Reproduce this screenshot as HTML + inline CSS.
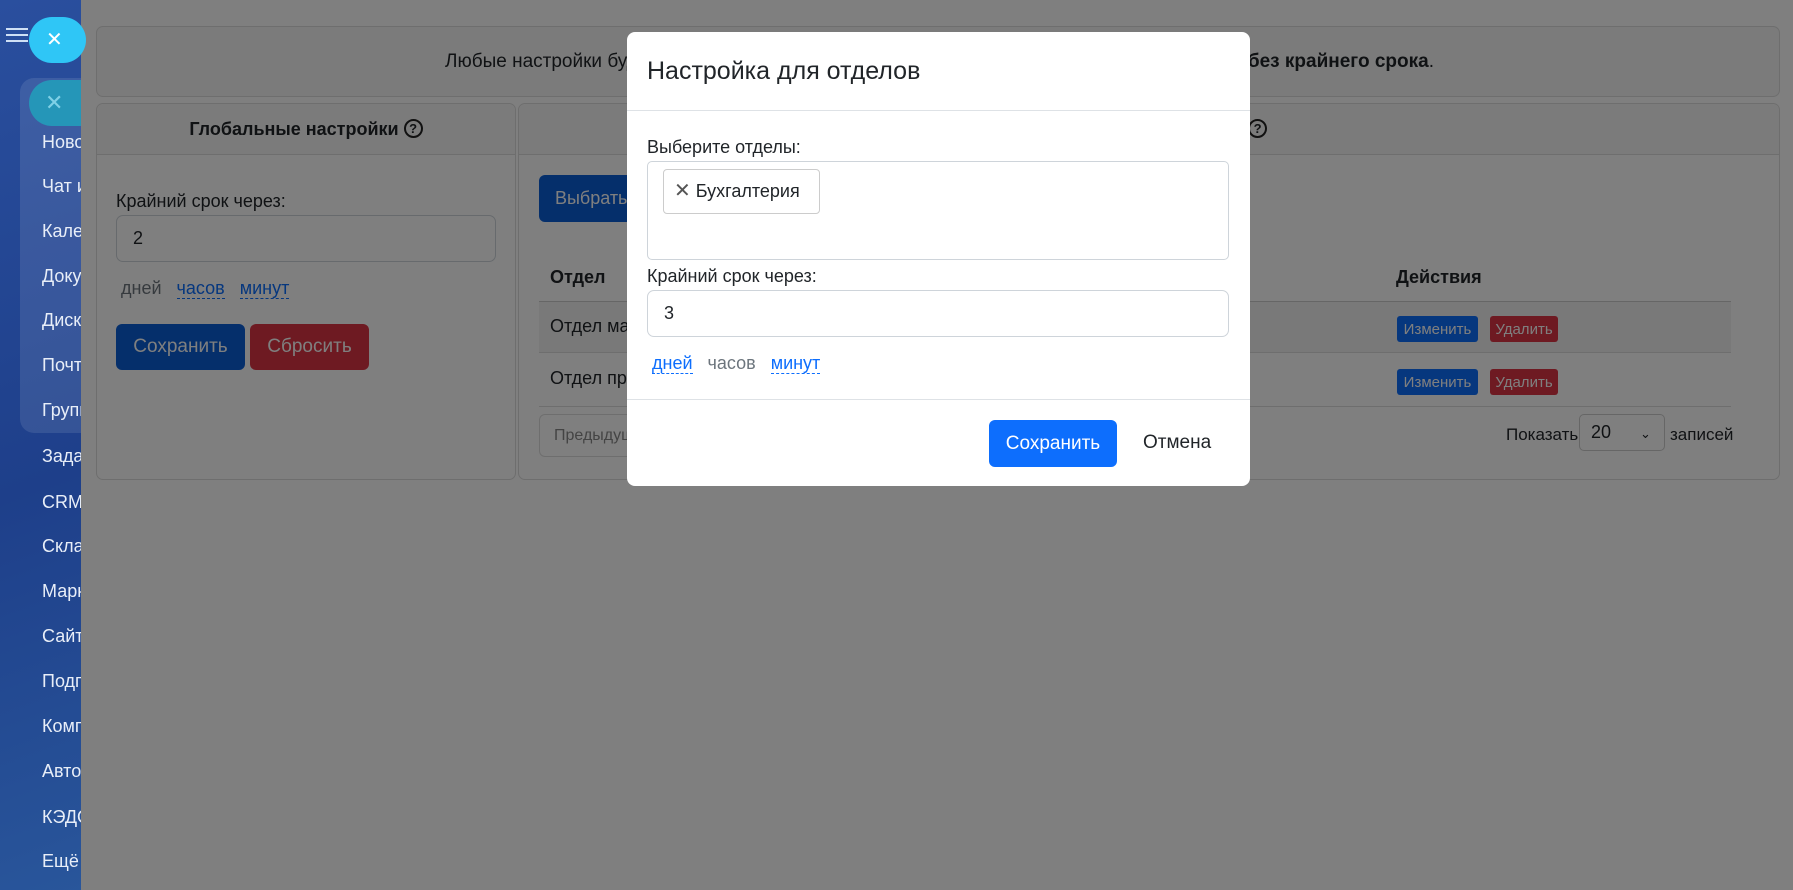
<!DOCTYPE html>
<html><head><meta charset="utf-8"><style>
*{box-sizing:border-box;margin:0;padding:0}
body{width:1793px;height:890px;overflow:hidden;position:relative;font-family:"Liberation Sans",sans-serif;font-size:18px;color:#212529;background:#1d3f8c}
.side{position:absolute;left:0;top:0;width:300px;height:890px;background:linear-gradient(160deg,#2a4f9e 0%,#1e3f8a 50%,#2b5a9e 100%)}
.side .it{position:absolute;left:42px;color:#e8eef8;font-size:18px}
.main{position:absolute;left:81px;top:0;width:1712px;height:890px;background:#fff}
.abs{position:absolute}
.card{position:absolute;border:1px solid #dcdcdc;border-radius:7px;background:#fff}
.hdr{background:#f7f7f7;border-bottom:1px solid #dcdcdc;font-weight:bold;text-align:center}
.inp{position:absolute;border:1px solid #ced4da;border-radius:7px;background:#fff;padding-left:16px;display:flex;align-items:center}
.btn{position:absolute;border-radius:6px;color:#fff;display:flex;align-items:center;justify-content:center}
.lnk{color:#0d6efd;border-bottom:1px dashed #0d6efd}
.ov{position:absolute;left:81px;top:0;width:1712px;height:890px;background:rgba(0,0,0,.5)}
.q{display:inline-block;width:19px;height:19px;border:2px solid #222;border-radius:50%;font-size:13px;line-height:15px;text-align:center;vertical-align:2px}
</style></head><body>
<div class="side">
 <div class="abs" style="left:6px;top:28px;width:22px;height:2px;background:#cfe0f5;box-shadow:0 6px #cfe0f5,0 12px #cfe0f5"></div>
 <div class="abs" style="left:20px;top:78px;width:120px;height:355px;background:rgba(255,255,255,.1);border-radius:14px"></div>
 <div class="abs" style="left:29px;top:80px;width:80px;height:46px;border-radius:23px;background:#2596b8;color:#7fd0e6;font-size:22px;padding-left:16px;line-height:46px">✕</div>
 <div class="it" style="top:132px">Новости</div><div class="it" style="top:176px">Чат и</div><div class="it" style="top:221px">Календарь</div><div class="it" style="top:266px">Документы</div><div class="it" style="top:310px">Диск</div><div class="it" style="top:355px">Почта</div><div class="it" style="top:400px">Группы</div><div class="it" style="top:446px">Задачи</div><div class="it" style="top:492px">CRM</div><div class="it" style="top:536px">Склад</div><div class="it" style="top:581px">Маркет</div><div class="it" style="top:626px">Сайты</div><div class="it" style="top:671px">Подпись</div><div class="it" style="top:716px">Компания</div><div class="it" style="top:761px">Автоматизация</div><div class="it" style="top:807px">КЭДО</div><div class="it" style="top:851px">Ещё</div>
</div>
<div class="main">
 <div class="card" style="left:15px;top:26px;width:1684px;height:71px;background:#f7f7f7">
  <div class="abs" style="left:348px;top:24px;width:989px;display:flex;justify-content:space-between;font-size:19px"><span>Любые настройки будут применены</span><span><b>без крайнего срока</b>.</span></div>
 </div>
 <div class="card" style="left:15px;top:103px;width:420px;height:377px">
  <div class="hdr" style="height:51px;line-height:51px;border-radius:7px 7px 0 0">Глобальные настройки <span class="q">?</span></div>
  <div class="abs" style="left:19px;top:87px">Крайний срок через:</div>
  <div class="inp" style="left:19px;top:111px;width:380px;height:47px">2</div>
  <div class="abs" style="left:24px;top:174px;color:#6c757d">дней &nbsp; <span class="lnk">часов</span> &nbsp; <span class="lnk">минут</span></div>
  <div class="btn" style="left:19px;top:220px;width:129px;height:46px;background:#0b5ed7;font-size:19px">Сохранить</div>
  <div class="btn" style="left:153px;top:220px;width:119px;height:46px;background:#dc3545;font-size:19px">Сбросить</div>
 </div>
 <div class="card" style="left:437px;top:103px;width:1262px;height:377px">
  <div class="hdr" style="height:51px;line-height:51px;border-radius:7px 7px 0 0">Настройки для отделов <span class="q">?</span></div>
  <div class="btn" style="left:20px;top:71px;width:170px;height:47px;background:#0b5ed7">Выбрать отделы</div>
  <div class="abs" style="left:31px;top:163px;font-weight:bold">Отдел</div>
  <div class="abs" style="left:877px;top:163px;font-weight:bold">Действия</div>
  <div class="abs" style="left:20px;top:197px;width:1192px;height:52px;background:#f2f2f2;border-top:1px solid #ccc;border-bottom:1px solid #ddd"></div>
  <div class="abs" style="left:31px;top:212px">Отдел маркетинга</div>
  <div class="abs" style="left:31px;top:264px">Отдел продаж</div>
  <div class="abs" style="left:20px;top:302px;width:1192px;height:1px;background:#ddd"></div>
  <div class="btn" style="left:878px;top:212px;width:81px;height:26px;background:#0d6efd;font-size:15px;border-radius:3px">Изменить</div>
  <div class="btn" style="left:971px;top:212px;width:68px;height:26px;background:#dc3545;font-size:15px;border-radius:3px">Удалить</div>
  <div class="btn" style="left:878px;top:265px;width:81px;height:26px;background:#0d6efd;font-size:15px;border-radius:3px">Изменить</div>
  <div class="btn" style="left:971px;top:265px;width:68px;height:26px;background:#dc3545;font-size:15px;border-radius:3px">Удалить</div>
  <div class="abs" style="left:20px;top:310px;width:130px;height:43px;border:1px solid #ddd;border-radius:6px;color:#888;font-size:16px;line-height:41px;padding-left:14px">Предыдущая</div>
  <div class="abs" style="left:987px;top:321px;font-size:17px">Показать</div>
  <div class="abs" style="left:1060px;top:310px;width:86px;height:37px;border:1px solid #ccc;border-radius:5px;padding-left:11px;line-height:35px">20 <span style="margin-left:24px;font-size:13px">&#8964;</span></div>
  <div class="abs" style="left:1151px;top:321px;font-size:17px">записей</div>
 </div>
</div>
<div class="ov"></div>
<div class="abs" style="left:29px;top:17px;width:57px;height:46px;border-radius:23px;background:#2fc6f6;color:#fff;font-size:20px;line-height:46px;padding-left:17px">✕</div>
<div class="abs" style="left:627px;top:32px;width:623px;height:454px;background:#fff;border-radius:8px">
 <div class="abs" style="left:20px;top:25px;font-size:25px;color:#212529">Настройка для отделов</div>
 <div class="abs" style="left:0;top:78px;width:623px;height:1px;background:#dee2e6"></div>
 <div class="abs" style="left:20px;top:105px">Выберите отделы:</div>
 <div class="abs" style="left:20px;top:129px;width:582px;height:99px;border:1px solid #ced4da;border-radius:5px"></div>
 <div class="abs" style="left:36px;top:137px;width:157px;height:45px;border:1px solid #ccc;border-radius:4px;line-height:43px;padding-left:10px;font-size:18px"><span style="font-size:20px;color:#555">✕</span> Бухгалтерия</div>
 <div class="abs" style="left:20px;top:234px">Крайний срок через:</div>
 <div class="inp" style="left:20px;top:258px;width:582px;height:47px">3</div>
 <div class="abs" style="left:25px;top:321px;color:#6c757d"><span class="lnk">дней</span> &nbsp; часов &nbsp; <span class="lnk">минут</span></div>
 <div class="abs" style="left:0;top:367px;width:623px;height:1px;background:#dee2e6"></div>
 <div class="btn" style="left:362px;top:388px;width:128px;height:47px;background:#0d6efd;font-size:19px">Сохранить</div>
 <div class="abs" style="left:516px;top:400px;font-size:19px">Отмена</div>
</div>
</body></html>
